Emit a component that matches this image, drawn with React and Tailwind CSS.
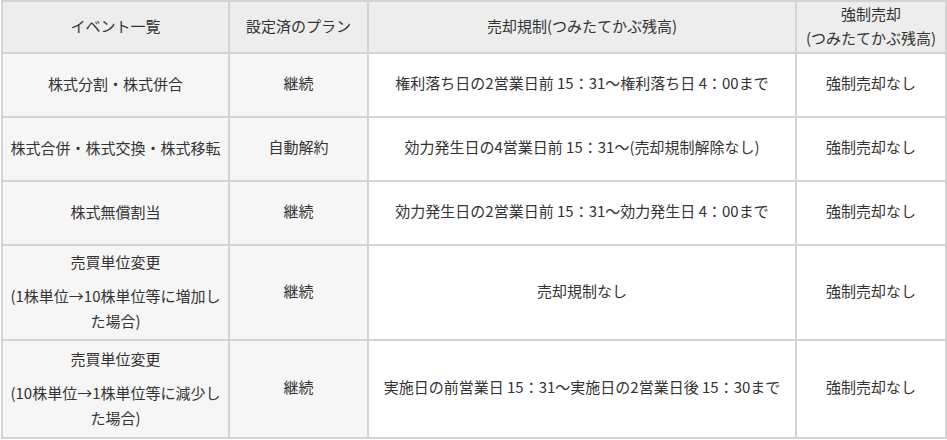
import React from 'react';

const rows = [
    {
        event: ['株式分割・株式併合'],
        plan: '継続',
        rule: '権利落ち日の2営業日前 15：31～権利落ち日 4：00まで',
        force: '強制売却なし',
        h: 'h-[64px]',
    },
    {
        event: ['株式合併・株式交換・株式移転'],
        plan: '自動解約',
        rule: '効力発生日の4営業日前 15：31～(売却規制解除なし)',
        force: '強制売却なし',
        h: 'h-[64px]',
    },
    {
        event: ['株式無償割当'],
        plan: '継続',
        rule: '効力発生日の2営業日前 15：31～効力発生日 4：00まで',
        force: '強制売却なし',
        h: 'h-[64px]',
    },
    {
        event: ['売買単位変更', '(1株単位→10株単位等に増加した場合)'],
        plan: '継続',
        rule: '売却規制なし',
        force: '強制売却なし',
        h: 'h-[95px]',
    },
    {
        event: ['売買単位変更', '(10株単位→1株単位等に減少した場合)'],
        plan: '継続',
        rule: '実施日の前営業日 15：31～実施日の2営業日後 15：30まで',
        force: '強制売却なし',
        h: 'h-[98px]',
    },
];

const cell = 'border-2 border-[#d4d4d4] text-center align-middle px-[6px]';

export default function App() {
    return (
        <div className="bg-white w-[947px] h-[440px] pl-[1px] text-[#333] text-[15px]" style={{ fontFamily: '"Noto Sans CJK JP", "Noto Sans", sans-serif' }}>
            <table className="table-fixed border-collapse w-[944px]">
                <colgroup>
                    <col className="w-[227px]" />
                    <col className="w-[139px]" />
                    <col className="w-[428px]" />
                    <col className="w-[150px]" />
                </colgroup>
                <thead>
                    <tr className="bg-[#ededed]">
                        <th className={`${cell} font-normal h-[50px] leading-6 pb-[2px]`}>イベント一覧</th>
                        <th className={`${cell} font-normal leading-6 pb-[2px]`}>設定済のプラン</th>
                        <th className={`${cell} font-normal leading-6 pb-[2px]`}>売却規制(つみたてかぶ残高)</th>
                        <th className={`${cell} font-normal leading-6 pb-[2px]`}>強制売却<br />(つみたてかぶ残高)</th>
                    </tr>
                </thead>
                <tbody>
                    {rows.map((r, i) => (
                        <tr key={i}>
                            <td className={`${cell} bg-[#f6f6f6] ${r.h} leading-[25px] pb-[3px]`}>
                                {r.event.map((t, j) => (
                                    <p key={j} className={j > 0 ? 'mt-[9px]' : ''}>{t}</p>
                                ))}
                            </td>
                            <td className={`${cell} bg-[#f6f6f6] pb-[3px]`}>{r.plan}</td>
                            <td className={`${cell} bg-white pb-[3px]`}>{r.rule}</td>
                            <td className={`${cell} bg-white pb-[3px]`}>{r.force}</td>
                        </tr>
                    ))}
                </tbody>
            </table>
        </div>
    );
}
